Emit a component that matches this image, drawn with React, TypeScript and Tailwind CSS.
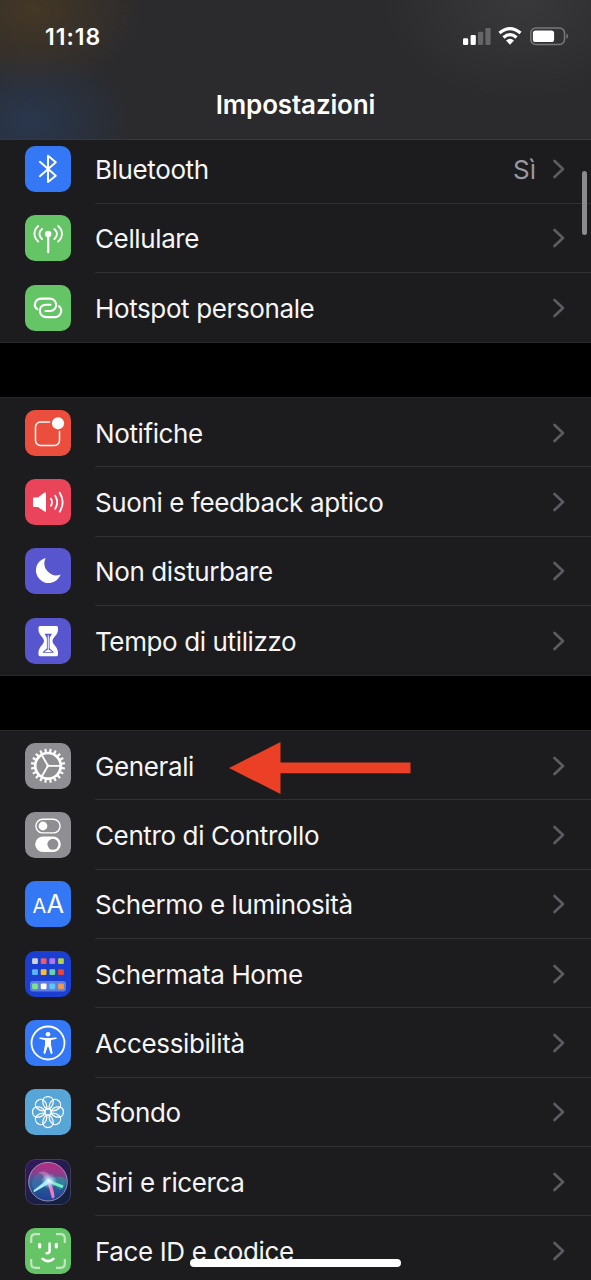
import type { ReactNode } from 'react';

interface SettingsItem {
  label: string;
  icon: ReactNode;
  bg: string;
  value?: string;
  highlighted?: boolean;
}

const stroke = {
  fill: 'none',
  stroke: '#fff',
  strokeLinecap: 'round',
  strokeLinejoin: 'round',
} as const;

function BluetoothIcon() {
  return <path {...stroke} strokeWidth="2" d="M14.9 15.8 30.8 29.8 23 36V9.8l7.8 6.4-15.9 14" />;
}

function CellularIcon() {
  return (
    <>
      <g {...stroke} strokeWidth="1.9">
        <path d="M13.2 11c-5 4.5-5 11 0 15.5M33.2 11c5 4.5 5 11 0 15.5M17 14c-3.4 3-3.4 7 0 10M29.4 14c3.4 3 3.4 7 0 10" />
        <path d="M23.2 19.5V37.2" strokeWidth="2.2" />
      </g>
      <circle cx="23.2" cy="19" r="3.2" fill="#fff" />
    </>
  );
}

function HotspotIcon() {
  return (
    <g {...stroke} strokeWidth="2.1">
      <path d="M12.3 24.3C7.5 20.5 10.5 13.6 16.5 13.6H24.5C33 13.6 33.5 26 25 26H20.5" />
      <path d="M34 21.2C38.5 25 35.5 32.1 29.5 32.1H21.5C13 32.1 12.5 19.7 21 19.7H25.5" />
    </g>
  );
}

function NotificationsIcon() {
  return (
    <>
      <path {...stroke} strokeWidth="1.5" d="M24.6 12H15.5a5 5 0 0 0-5 5V30.5a5 5 0 0 0 5 5H29.5a5 5 0 0 0 5-5V21.5" />
      <circle cx="33" cy="13.3" r="6.1" fill="#fff" />
    </>
  );
}

function SoundsIcon() {
  return (
    <>
      <path fill="#fff" d="M9 18.5H13L19.5 13.6Q21 13 21 14.5V31.8Q21 33.3 19.5 32.6L13 28H9Q8 28 8 27V19.5Q8 18.5 9 18.5Z" />
      <g {...stroke} strokeWidth="1.8">
        <path d="M26 19.7q2 3.5 0 7M30.2 16.7q4 6.5 0 13M34.7 13.7q6 9.5 0 19" />
      </g>
    </>
  );
}

function MoonIcon() {
  return <path fill="#fff" d="M20.7 10A12.7 12.7 0 1 0 35.6 26.6A12 12 0 0 1 20.7 10Z" />;
}

function HourglassIcon() {
  return (
    <>
      <path
        fill="#fff"
        d="M15 8H31.5Q33 8 33 9.7V11.5C33 17 27.5 19.5 27.5 23S33 29 33 34.5V36.6Q33 38.3 31.5 38.3H15Q13.5 38.3 13.5 36.6V34.5C13.5 29 19 26.5 19 23S13.5 17 13.5 11.5V9.7Q13.5 8 15 8Z"
      />
      <path fill="#5856ce" d="M19.6 15.7H27C26.3 17.6 24.6 18.5 24.6 21V30C25.2 31.8 28.3 32.8 29 34.8H17.5C18.200 32.8 21.300 31.8 21.900 30V21C21.900 18.5 20.3 17.6 19.6 15.7Z" />
      <path stroke="#fff" strokeWidth="1" d="M23.25 17.2V33" />
      <path fill="#fff" d="M19.5 34Q20.7 32.4 23.25 31.8Q25.8 32.4 27 34Z" />
    </>
  );
}

function GearIcon() {
  const teeth = Array.from({ length: 20 }, (_, i) => i * 18 + 9);
  return (
    <g {...stroke}>
      <circle cx="23" cy="22.8" r="12.8" strokeWidth="2.7" />
      {teeth.map((a) => (
        <path key={a} d="M23 9.5V5.7" strokeWidth="2.1" transform={`rotate(${a} 23 22.8)`} strokeLinecap="butt" />
      ))}
      <path d="M23 22.8H35M23 22.8 17 12.5M23 22.8 17 33" strokeWidth="1.8" />
      <circle cx="23" cy="22.8" r="1.5" fill="#fff" stroke="none" />
    </g>
  );
}

function TogglesIcon() {
  return (
    <>
      <rect {...stroke} x="10.9" y="7.3" width="24.2" height="13.6" rx="6.8" strokeWidth="1.4" />
      <circle cx="18" cy="14" r="4.4" fill="#fff" />
      <rect x="10.2" y="24.6" width="25.6" height="15.4" rx="7.7" fill="#fff" />
      <circle cx="27.9" cy="32.3" r="5.5" fill="#8e8e93" />
    </>
  );
}

function DisplayIcon() {
  return (
    <g fill="#fff" className="font-['Inter',sans-serif]">
      <text x="7.4" y="32.4" fontSize="20">A</text>
      <text x="21.5" y="32.4" fontSize="25.5">A</text>
    </g>
  );
}

function HomeScreenIcon() {
  const rows = [
    { y: 7.3, colors: ['#d3d3d3', '#f05a60', '#b275f0', '#b5cf46'] },
    { y: 18.2, colors: ['#58b5f8', '#f7bd3c', '#6bd3a5', '#e8453a'] },
    { y: 32.4, colors: ['#7be588', '#ffffff', '#5ac8fa', '#f29a52'] },
  ];
  return (
    <>
      <rect x="5" y="30" width="36" height="10.4" rx="2.6" fill="#5f7ce2" />
      {rows.map((row) =>
        row.colors.map((c, i) => (
          <rect key={c} x={7.1 + i * 8.65} y={row.y} width="5.8" height="5.8" rx="1.1" fill={c} />
        ))
      )}
    </>
  );
}

function AccessibilityIcon() {
  return (
    <>
      <circle {...stroke} cx="23" cy="23" r="16.5" strokeWidth="1.8" />
      <circle cx="23" cy="14.2" r="2.3" fill="#fff" />
      <path
        fill="#fff"
        d="M15.2 17.4 21 18H25L30.8 17.4Q31.7 17.4 31.7 18.2T31 19.1L26 20V24.5L27.5 32.8Q27.5 33.8 26.7 34T25.6 33.3L23.5 27H22.5L20.4 33.3Q20 34.2 19.3 34T18.5 32.8L20 24.5V20L15 19.1Q14.3 19 14.3 18.2T15.2 17.4Z"
      />
    </>
  );
}

function WallpaperIcon() {
  const petals = [0, 45, 90, 135, 180, 225, 270, 315];
  return (
    <g {...stroke} strokeWidth="1.25">
      {petals.map((a) => (
        <path
          key={a}
          d="M23 7.5C26 7.5 28.2 9.6 28.2 12.5C28.2 15.5 26.5 18.300 24 20.200M23 7.5C20 7.5 17.8 9.6 17.8 12.5C17.8 15.5 19.500 18.300 22 20.200"
          transform={`rotate(${a} 23 23)`}
        />
      ))}
      <circle cx="23" cy="23" r="3.2" />
    </g>
  );
}

function SiriIcon() {
  return (
    <>
      <defs>
        <linearGradient id="siriBg" x1="0" y1="0" x2="0.6" y2="1">
          <stop offset="0" stopColor="#35185c" />
          <stop offset="1" stopColor="#14203f" />
        </linearGradient>
        <linearGradient id="siriOrb" x1="0.5" y1="0" x2="0.45" y2="1">
          <stop offset="0" stopColor="#b52a80" />
          <stop offset="0.25" stopColor="#963b8c" />
          <stop offset="0.55" stopColor="#2b5f95" />
          <stop offset="1" stopColor="#1e3f94" />
        </linearGradient>
        <radialGradient id="siriGlow">
          <stop offset="0" stopColor="#fff" />
          <stop offset="0.3" stopColor="#c9f1ff" stopOpacity="0.8" />
          <stop offset="1" stopColor="#8fd8ff" stopOpacity="0" />
        </radialGradient>
      </defs>
      <rect x="0.5" y="0.5" width="45" height="45" rx="9.5" fill="url(#siriBg)" stroke="#3b4058" />
      <circle cx="23" cy="22.7" r="19.3" fill="url(#siriOrb)" stroke="#a79cb9" strokeWidth="0.9" />
      <path d="M23 22C29 18 37 15 41 21 41 26 38 29 35 31Z" fill="#2ba6a0" opacity="0.5" />
      <path d="M23 22C19 15 14 12 10 17 6 21 6 28 10 32Z" fill="#4477b5" opacity="0.5" />
      <path d="M23 22C18 18 18 14 13 14 20 10 27 14 23 22Z" fill="#e2a3d6" opacity="0.45" />
      <path d="M23 20 8.5 31.5 9 33.3 25 24Z" fill="#a8f0ff" />
      <path d="M22 20 38.5 26.5 37.5 29.3 24 24Z" fill="#78ecc5" />
      <path d="M22 22 27 39.5 29.5 38.5Q29 28 24 22Z" fill="#ee78c5" />
      <circle cx="24" cy="22" r="8" fill="url(#siriGlow)" />
    </>
  );
}

function FaceIdIcon() {
  return (
    <g {...stroke}>
      <path
        strokeWidth="2.2"
        opacity="0.6"
        strokeLinecap="butt"
        d="M6.2 15V10.5Q6.2 6.2 10.5 6.2H15M31 6.2H35.5Q39.8 6.2 39.8 10.5V15M39.8 31V35.5Q39.8 39.8 35.5 39.8H31M15 39.8H10.5Q6.2 39.8 6.2 35.5V31"
      />
      <path strokeWidth="3.2" d="M14.7 16.3V19M31.3 16.3V19" />
      <path strokeWidth="2.5" d="M24.6 15.5V23Q24.6 25.2 21.6 25.2M17.5 30.7Q23 35.5 28.5 30.7" />
    </g>
  );
}

const groups: SettingsItem[][] = [
  [
    { label: 'Bluetooth', icon: <BluetoothIcon />, bg: 'bg-[#3478f6]', value: 'Sì' },
    { label: 'Cellulare', icon: <CellularIcon />, bg: 'bg-[#65c466]' },
    { label: 'Hotspot personale', icon: <HotspotIcon />, bg: 'bg-[#65c466]' },
  ],
  [
    { label: 'Notifiche', icon: <NotificationsIcon />, bg: 'bg-[#eb4e3d]' },
    { label: 'Suoni e feedback aptico', icon: <SoundsIcon />, bg: 'bg-[#ea445a]' },
    { label: 'Non disturbare', icon: <MoonIcon />, bg: 'bg-[#5856ce]' },
    { label: 'Tempo di utilizzo', icon: <HourglassIcon />, bg: 'bg-[#5856ce]' },
  ],
  [
    { label: 'Generali', icon: <GearIcon />, bg: 'bg-[#8e8e93]', highlighted: true },
    { label: 'Centro di Controllo', icon: <TogglesIcon />, bg: 'bg-[#8e8e93]' },
    { label: 'Schermo e luminosità', icon: <DisplayIcon />, bg: 'bg-[#3478f6]' },
    { label: 'Schermata Home', icon: <HomeScreenIcon />, bg: 'bg-[#1b3fd0]' },
    { label: 'Accessibilità', icon: <AccessibilityIcon />, bg: 'bg-[#3478f6]' },
    { label: 'Sfondo', icon: <WallpaperIcon />, bg: 'bg-[#58a5d8]' },
    { label: 'Siri e ricerca', icon: <SiriIcon />, bg: 'bg-[#1b1b45]' },
    { label: 'Face ID e codice', icon: <FaceIdIcon />, bg: 'bg-[#65c466]' },
  ],
];

function StatusBar() {
  return (
    <div className="flex h-[72px] items-center justify-between pl-[45px] pr-[22px]">
      <span className="pt-0.5 text-[23px] font-semibold tracking-[1px]">11:18</span>
      <svg width="106" height="20" viewBox="0 0 106 20">
        <g fill="#fff">
          <rect x="0" y="12.3" width="5.2" height="6.7" rx="1.3" />
          <rect x="7.6" y="9" width="5.2" height="10" rx="1.3" />
          <rect x="15" y="5.7" width="5.2" height="13.3" rx="1.3" opacity="0.25" />
          <rect x="22.4" y="2" width="5.2" height="17" rx="1.3" opacity="0.25" />
        </g>
        <g fill="none" stroke="#fff" strokeWidth="3.3">
          <path d="M36.5 7.1Q47 -1.9 57.5 7.1" />
          <path d="M40.5 11.4Q47 5.9 53.5 11.4" />
        </g>
        <path d="M43 14.5Q47 11.2 51 14.5L47 18.7Z" fill="#fff" />
        <rect x="67.8" y="2" width="33.7" height="16.5" rx="5" fill="none" stroke="#78787b" strokeWidth="1.5" />
        <rect x="69.9" y="4.5" width="21.2" height="11.6" rx="2.7" fill="#fff" />
        <path d="M103.3 7.3Q106.8 10.2 103.3 13.2Z" fill="#78787b" />
      </svg>
    </div>
  );
}

function Chevron() {
  return (
    <svg width="13" height="20" viewBox="0 0 13 20" className="shrink-0">
      <path d="M2.5 2 11 10 2.5 18" fill="none" stroke="#5b5b60" strokeWidth="2.7" strokeLinecap="round" strokeLinejoin="round" />
    </svg>
  );
}

function HighlightArrow() {
  return (
    <svg width="182" height="52" viewBox="0 0 182 52" className="relative top-[2px] ml-[35px] shrink-0">
      <path d="M0 26 51.5 0V20.5H181.5V31.3H51.5V52Z" fill="#eb4026" />
    </svg>
  );
}

function SettingsRow({ item, last }: { item: SettingsItem; last: boolean }) {
  return (
    <div className="flex h-[69.33px] items-center pl-[25px]">
      <div className={`size-[46px] shrink-0 overflow-hidden rounded-[10px] ${item.bg}`}>
        <svg width="46" height="46" viewBox="0 0 46 46">
          {item.icon}
        </svg>
      </div>
      <div className={`ml-6 flex h-full flex-1 items-center border-b pr-[26px] pt-px ${last ? 'border-transparent' : 'border-[#303033]'}`}>
        <span className="whitespace-nowrap pt-px text-[26px] tracking-[-0.38px]">{item.label}</span>
        {item.highlighted && <HighlightArrow />}
        <div className="ml-auto flex items-center gap-4">
          {item.value && <span className="pt-px text-[26px] text-[#98989f]">{item.value}</span>}
          <Chevron />
        </div>
      </div>
    </div>
  );
}

export default function App() {
  return (
    <div className="relative h-[1280px] w-[591px] overflow-hidden bg-black font-['Inter',sans-serif] text-[#f5f5f6]">
      <header className="relative z-10 h-[139.5px] border-b border-[#38383a] bg-[#2b2b2e] bg-[radial-gradient(ellipse_110px_80px_at_32px_10px,#443725,transparent),radial-gradient(ellipse_100px_75px_at_30px_122px,#29374e,transparent),radial-gradient(ellipse_140px_100px_at_520px_0px,#39393c,transparent)] text-white">
        <StatusBar />
        <h1 className="mt-[13.5px] text-center text-[26px] font-semibold leading-[38px] tracking-[-0.15px]">Impostazioni</h1>
      </header>

      <main className="-mt-[6px] flex flex-col gap-[53.6px]">
        {groups.map((group, i) => (
          <section key={i} className="border-y border-[#29292b] bg-[#1c1c1f]">
            {group.map((item, j) => (
              <SettingsRow key={item.label} item={item} last={j === group.length - 1} />
            ))}
          </section>
        ))}
      </main>

      {/* Scroll position */}
      <div className="absolute right-[4.5px] top-[171px] h-16 w-[5px] rounded-full bg-[#8b8b8e]" />

      {/* Home indicator */}
      <div className="absolute left-[190px] top-[1259px] z-20 h-2 w-[211px] rounded-full bg-white" />
    </div>
  );
}
